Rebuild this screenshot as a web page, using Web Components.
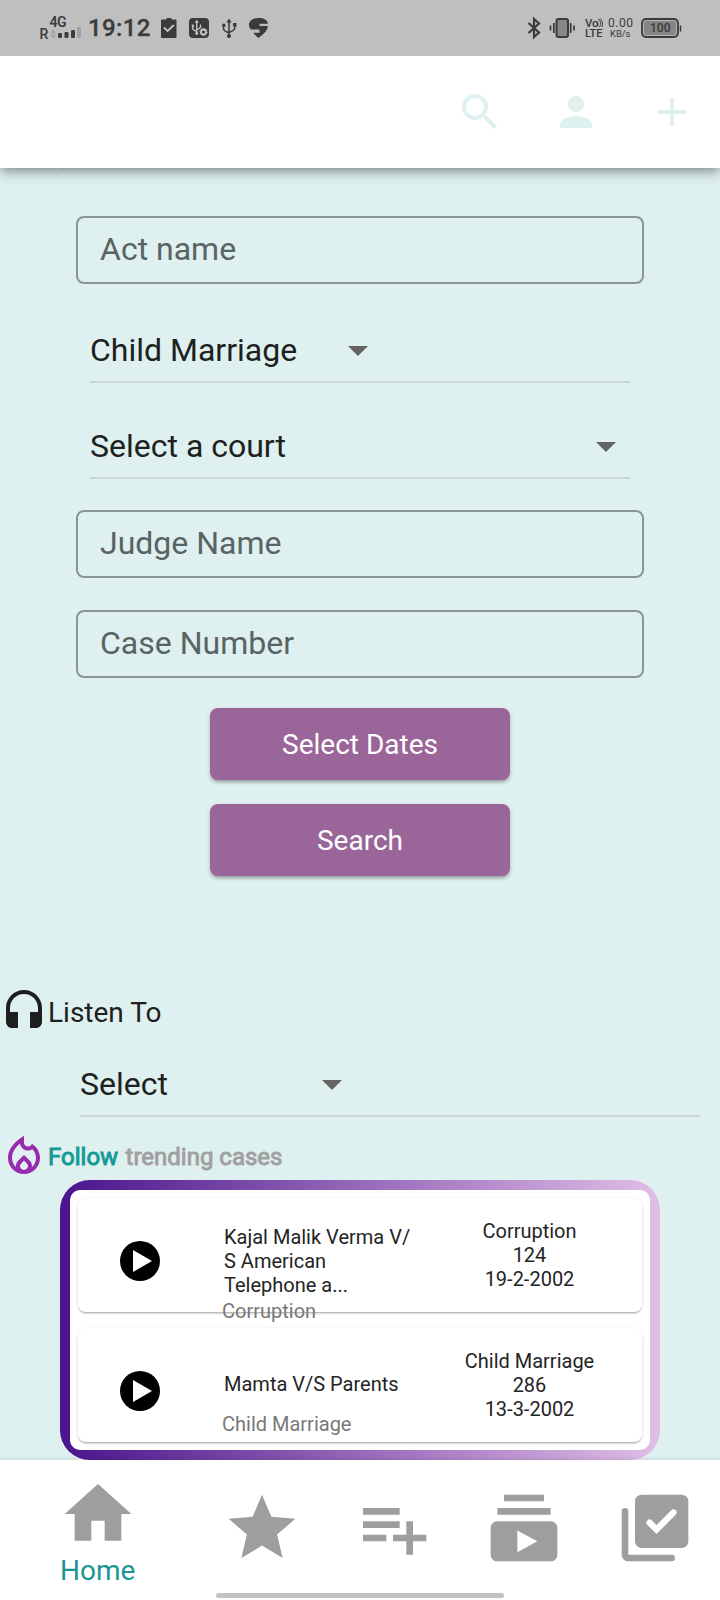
<!DOCTYPE html>
<html lang="en">
<head>
<meta charset="utf-8">
<title>Cases</title>
<style>
html,body{margin:0;padding:0}
body{width:720px;height:1600px;overflow:hidden;background:#def0ef;font-family:Roboto,"Liberation Sans",sans-serif;color:#1e2020}
</style>
</head>
<body>
<app-screen></app-screen>
<script>
const define = (name, html, extra) => {
  const tpl = document.createElement('template');
  tpl.innerHTML = html;
  customElements.define(name, class extends HTMLElement {
    constructor() {
      super();
      this.attachShadow({mode: 'open'}).append(tpl.content.cloneNode(true));
    }
    connectedCallback() { if (extra) extra(this, this.shadowRoot); }
  });
};

const ICONS = {
  search: '<path d="M15.5 14h-.79l-.28-.27A6.47 6.47 0 0 0 16 9.5 6.5 6.5 0 1 0 9.5 16c1.61 0 3.09-.59 4.23-1.57l.27.28v.79l5 4.99L20.49 19l-4.99-5zm-6 0C7.01 14 5 11.99 5 9.5S7.01 5 9.5 5 14 7.01 14 9.5 11.99 14 9.5 14z"/>',
  person: '<path d="M12 12c2.21 0 4-1.79 4-4s-1.79-4-4-4-4 1.79-4 4 1.79 4 4 4zm0 2c-2.67 0-8 1.34-8 4v2h16v-2c0-2.66-5.33-4-8-4z"/>',
  add: '<path d="M19 13h-6v6h-2v-6H5v-2h6V5h2v6h6v2z"/>',
  headset: '<path d="M12 1c-4.97 0-9 4.03-9 9v7c0 1.66 1.34 3 3 3h3v-8H5v-2c0-3.87 3.13-7 7-7s7 3.13 7 7v2h-4v8h3c1.66 0 3-1.34 3-3v-7c0-4.97-4.03-9-9-9z"/>',
  fire: '<path d="M16 6l-.44.55C14.38 8.02 12 7.19 12 5.3V2S4 6 4 13c0 4.42 3.58 8 8 8s8-3.58 8-8c0-2.96-1.61-5.62-4-7zM12 19c-1.1 0-2-.87-2-1.94 0-.51.2-.99.58-1.36L12 14.3l1.43 1.4c.37.37.57.85.57 1.36 0 1.07-.9 1.94-2 1.94zM15.96 17.5c.04-.36.22-1.89-1.13-3.22L12 11.5l-2.83 2.78C7.81 15.62 8 17.16 8.04 17.5 6.79 16.4 6 14.79 6 13c0-3.16 2.13-5.65 4.03-7.25.23 1.99 1.93 3.55 3.99 3.55.78 0 1.54-.23 2.18-.66C17.34 9.78 18 11.35 18 13c0 1.79-.79 3.4-2.04 4.5z"/>',
  arrow: '<path d="M7 10l5 5 5-5z"/>',
  home: '<path d="M10 20v-6h4v6h5v-8h3L12 3 2 12h3v8z"/>',
  star: '<path d="M12 17.27L18.18 21l-1.64-7.03L22 9.24l-7.19-.61L12 2 9.19 8.63 2 9.24l5.46 4.73L5.82 21z"/>',
  playlist: '<path d="M14 10H3v2h11v-2zm0-4H3v2h11V6zm4 8v-4h-2v4h-4v2h4v4h2v-4h4v-2h-4zM3 16h7v-2H3v2z"/>',
  subs: '<path d="M20 8H4V6h16v2zm-2-6H6v2h12V2zm4 10v8c0 1.1-.9 2-2 2H4c-1.1 0-2-.9-2-2v-8c0-1.1.9-2 2-2h16c1.1 0 2 .9 2 2zm-6 4l-6-3.27v6.53L16 16z"/>',
  check: '<rect x="6" y="2" width="16" height="16" rx="2"/><path d="M3 7v13a1 1 0 0 0 1 1h13" fill="none" stroke="currentColor" stroke-width="2" stroke-linecap="round"/><path d="M10.4 10.4l2.05 2.05 5.1-5.1" fill="none" stroke="#fff" stroke-width="1.9" stroke-linecap="round"/>'
};

define('m-icon', `<style>:host{display:block;flex:none;width:48px;height:48px}svg{display:block;width:100%;height:100%;fill:currentColor}</style><svg viewBox="0 0 24 24"></svg>`,
  (el, root) => { root.querySelector('svg').innerHTML = ICONS[el.getAttribute('name')]; });

define('status-bar', `<style>
:host{display:flex;position:relative;z-index:3;box-sizing:border-box;height:56px;background:#bfbfbf;color:#3b3b3b;padding:0 39px 0 40px;justify-content:space-between}
div{display:flex;align-items:flex-start}
svg{display:block;flex:none;overflow:visible;margin-top:16px}
b{font-weight:500;font-size:24px;line-height:28px;margin:14px 0 0 6px;width:63px;white-space:nowrap;letter-spacing:.35px;-webkit-text-stroke:.3px}
text{font-family:Roboto,sans-serif;font-weight:500;fill:#3b3b3b}
</style>
<div>
<svg width="42" height="24" fill="#3b3b3b"><text x="9.5" y="11" font-size="14" textLength="17" style="font-weight:600">4G</text><text x="-.5" y="23" font-size="14">R</text><path d="M10 17.500l3.200-4.500 3.200 4.500zM10 18.500l3.200 4.500 3.200-4.500z" fill="#a0a0a0" opacity=".8"/><rect x="18" y="17" width="4" height="5" rx="1.200"/><rect x="24.500" y="16" width="4" height="6" rx="1.200"/><rect x="31" y="14" width="4" height="8" rx="1.200"/><rect x="37" y="11" width="4" height="11" rx="1.200" fill="#a0a0a0"/></svg>
<b>19:12</b>
<svg style="margin-left:10px" width="15" height="24"><path d="M1 3.500h4L6 2h4l1 1.500h4a1 1 0 0 1 .5.8V21a1 1 0 0 1-1 1H1a1 1 0 0 1-1-1V4.300z" fill="#3b3b3b"/><path d="M3 11.500l3.600 3.600L12.800 9" fill="none" stroke="#c8c8c8" stroke-width="1.800"/></svg>
<svg style="margin-left:13px" width="20" height="24"><rect y="2" width="20" height="20" rx="4" fill="#3b3b3b"/><g stroke="#c8c8c8" fill="none" stroke-width="1.300"><path d="M7.700 5v13M3.800 10v3.200l3.900 2.500M11.500 8.500v3L7.700 14"/><circle cx="14.500" cy="16" r="2.500" stroke-width="1.800"/><circle cx="14.500" cy="16" r="3.600" stroke-dasharray="1.300 1.500" stroke-width="1"/></g><path d="M5.700 6.800l2-3 2 3z" fill="#c8c8c8"/><circle cx="3.800" cy="9.700" r="1.200" fill="#c8c8c8"/><circle cx="7.700" cy="17.500" r="1.400" fill="#c8c8c8"/></svg>
<svg style="margin-left:13px" width="15" height="24"><g stroke="#3b3b3b" fill="none" stroke-width="1.500"><path d="M7 5v15M1.500 9v3.500q0 2.500 5.500 4.500M12.700 8v4q0 2.500-5.700 4.500"/></g><path d="M4.300 6.500L7 2.500l2.700 4z" fill="#3b3b3b"/><circle cx="1.800" cy="9.300" r="1.700" fill="#3b3b3b"/><rect x="11" y="7" width="3.500" height="3.500" fill="#3b3b3b"/><circle cx="7" cy="20" r="2.100" fill="#3b3b3b"/></svg>
<svg style="margin-left:12px" width="20" height="24"><path d="M0 9C-.3 5 4 2 9.500 2S18.500 4 19 7.800H10.500V10H19C18.500 15 13.500 19 9.500 22 7.500 20.500 5.500 18.700 4.300 16.800H10.500V13.500H2C1 12.500 0 11 0 9z" fill="#3b3b3b"/></svg>
</div>
<div>
<svg width="12" height="24"><path d="M.5 7l10.500 9.500-5 4.500V3l5 4.500L.5 17" fill="none" stroke="#3b3b3b" stroke-width="2.200"/></svg>
<svg style="margin-left:10px" width="25" height="24"><rect x="6.500" y="3" width="11.500" height="18" rx="2" fill="#888" stroke="#3b3b3b" stroke-width="2"/><path d="M.5 9.500v5M3.800 7v10M20.700 7v10M24 9.500v5" stroke="#3b3b3b" stroke-width="1.700"/></svg>
<svg style="margin-left:10px" width="18" height="24"><text x="0" y="11" font-size="11.500" textLength="13.500">Vo</text><path d="M12 5.500q2 2.500 0 5M13 3q4.500 3 1.500 8M15 2.500q4 4 1.800 8.500" fill="none" stroke="#3b3b3b"/><text x="0" y="21" font-size="11" textLength="17.500" lengthAdjust="spacingAndGlyphs">LTE</text></svg>
<svg style="margin-left:5px" width="25" height="24"><text x="0" y="11" font-size="12" textLength="25" style="font-weight:400">0.00</text><text x="2" y="20.500" font-size="9.500" textLength="20.500" style="font-weight:400">KB/s</text></svg>
<svg style="margin-left:8px" width="40" height="24"><rect x="1" y="3" width="36" height="18" rx="4" fill="#858585" stroke="#3b3b3b" stroke-width="1.800"/><rect x="2.500" y="4.500" width="33" height="15" rx="3" fill="none" stroke="#b5b5b5" stroke-width="1"/><path d="M39.500 9.500v6" stroke="#3b3b3b" stroke-width="1.500"/><text x="9" y="16" font-size="12" textLength="20.500">100</text></svg>
</div>`);

define('app-bar', `<style>
:host{display:flex;position:relative;z-index:2;height:112px;background:#fff;color:#def0ef;align-items:center;justify-content:flex-end;gap:48px;padding-right:24px;box-shadow:0 4px 8px -2px rgba(0,0,0,.24),0 7px 10px rgba(0,0,0,.13),0 2px 16px rgba(0,0,0,.1)}
</style><m-icon name="search"></m-icon><m-icon name="person"></m-icon><m-icon name="add"></m-icon>`);

define('text-field', `<style>
:host{display:flex;box-sizing:border-box;width:568px;height:68px;border:2px solid #889796;border-radius:8px;padding:0 22px 2px;align-items:center;font-size:32px;line-height:36px;color:#5a6363}
</style><slot></slot>`);

define('drop-down', `<style>
:host{display:flex;box-sizing:border-box;height:66px;border-bottom:2px solid #c9d7d6;align-items:center;font-size:32px;line-height:36px;color:#1d2120}
span{flex:none;width:var(--label);padding-top:2px}
m-icon{width:48px;height:48px;color:#636463;margin-top:2px}
</style><span><slot></slot></span><m-icon name="arrow"></m-icon>`,
  (el) => el.style.setProperty('--label', el.getAttribute('label-width') + 'px'));

define('action-button', `<style>
:host{display:flex;width:300px;height:72px;border-radius:8px;background:#9a6598;color:#fff;font-size:28px;align-items:center;justify-content:center;box-shadow:0 3px 3px -1px rgba(0,0,0,.2),0 2px 5px rgba(0,0,0,.18)}
</style><slot></slot>`);

define('icon-heading', `<style>
:host{display:flex;height:48px}
div{white-space:pre;padding-top:1px}
</style><slot name="icon"></slot><div><slot></slot></div>`);

define('case-card', `<style>
:host{display:grid;grid-template-columns:144px 190px 1fr;box-sizing:border-box;height:114px;border-radius:8px;background:#fff;box-shadow:0 2px 2px -1px rgba(0,0,0,.26),0 1px 3px rgba(0,0,0,.17);font-size:20px;line-height:24px;color:#242424}
svg{display:block;width:40px;height:40px;margin:43px 0 0 42px}
.mid{padding-left:2px;height:114px}
.title{padding-top:var(--title-top);white-space:pre-line;width:200px}
.kind{color:#787878;margin:var(--kind-gap) 0 0 -2px}
.meta{text-align:center;padding:21px 0 0 5px;white-space:pre-line}
</style>
<svg viewBox="0 0 40 40"><circle cx="20" cy="20" r="20"/><path d="M13 9l19 11-19 11z" fill="#fff"/></svg>
<div class="mid"><div class="title"><slot name="title"></slot></div><div class="kind"><slot name="kind"></slot></div></div>
<div class="meta"><slot></slot></div>`);

define('trend-panel', `<style>
:host{display:block;box-sizing:border-box;width:600px;height:280px;padding:10px;border-radius:30px;background:linear-gradient(90deg,#4a148c,#e1bee7)}
div{display:flex;flex-direction:column;gap:16px;box-sizing:border-box;height:260px;padding:8px;border-radius:10px;background:#fff}
</style><div><slot></slot></div>`);

define('nav-item', `<style>
:host{display:flex;flex-direction:column;align-items:center;flex:1 1 0;padding-top:28px;box-sizing:border-box}
:host([active]){flex-grow:1.5;padding-top:14px}
m-icon{width:80px;height:80px;color:#9e9e9e}
span{font-size:28px;line-height:32px;margin:1px 1px 0 0;color:#1b9692}
</style><m-icon></m-icon><span><slot></slot></span>`,
  (el, root) => {
    const old = root.querySelector('m-icon'), icon = document.createElement('m-icon');
    icon.setAttribute('name', el.getAttribute('icon'));
    old.replaceWith(icon);
  });

define('bottom-nav', `<style>
:host{display:flex;position:relative;z-index:2;height:140px;background:#fff;box-shadow:0 -1px 4px rgba(0,0,0,.1)}
i{position:absolute;left:216px;top:133px;width:288px;height:5px;border-radius:3px;background:#c2c2c2}
</style>
<nav-item icon="home" active>Home</nav-item><nav-item icon="star"></nav-item><nav-item icon="playlist"></nav-item><nav-item icon="subs"></nav-item><nav-item icon="check"></nav-item><i></i>`);

define('app-screen', `<style>
:host{display:flex;flex-direction:column;width:720px;height:1600px}
main{flex:none;position:relative;height:1292px;box-sizing:border-box;padding-top:48px}
.mark{position:absolute;z-index:3;left:61px;top:0;width:2px;height:1px;background:#8b8fa3}
form{display:flex;flex-direction:column;align-items:center;margin:0}
drop-down{width:540px}
.listen{margin-top:112px}
.l{font-size:28px;line-height:48px}
.trend{margin-top:15px;font-size:24px;line-height:48px;-webkit-text-stroke:.9px}
.trend .f{color:#149a95}
.trend .t{color:#a0a0a0;margin-left:1.5px}
</style>
<status-bar></status-bar><app-bar></app-bar>
<main><i class="mark"></i>
<form>
<text-field>Act name</text-field>
<drop-down label-width="244" style="margin-top:33px">Child Marriage</drop-down>
<drop-down label-width="492" style="margin-top:30px">Select a court</drop-down>
<text-field style="margin-top:31px">Judge Name</text-field>
<text-field style="margin-top:32px">Case Number</text-field>
<action-button style="margin-top:30px">Select Dates</action-button>
<action-button style="margin-top:24px">Search</action-button>
</form>
<icon-heading class="listen"><m-icon name="headset" slot="icon"></m-icon><span class="l">Listen To</span></icon-heading>
<drop-down label-width="228" style="width:620px;margin:15px 0 0 80px">Select</drop-down>
<icon-heading class="trend"><m-icon name="fire" slot="icon" style="color:#982aae"></m-icon><span class="f">Follow</span><span class="t"> trending cases</span></icon-heading>
<trend-panel style="margin-left:60px">
<case-card style="--title-top:27px;--kind-gap:2px"><span slot="title">Kajal Malik Verma V/
S American
Telephone a...</span><span slot="kind">Corruption</span>Corruption
124
19-2-2002</case-card>
<case-card style="--title-top:44px;--kind-gap:16px"><span slot="title">Mamta V/S Parents</span><span slot="kind">Child Marriage</span>Child Marriage
286
13-3-2002</case-card>
</trend-panel>
</main>
<bottom-nav></bottom-nav>`);
</script>
</body>
</html>
